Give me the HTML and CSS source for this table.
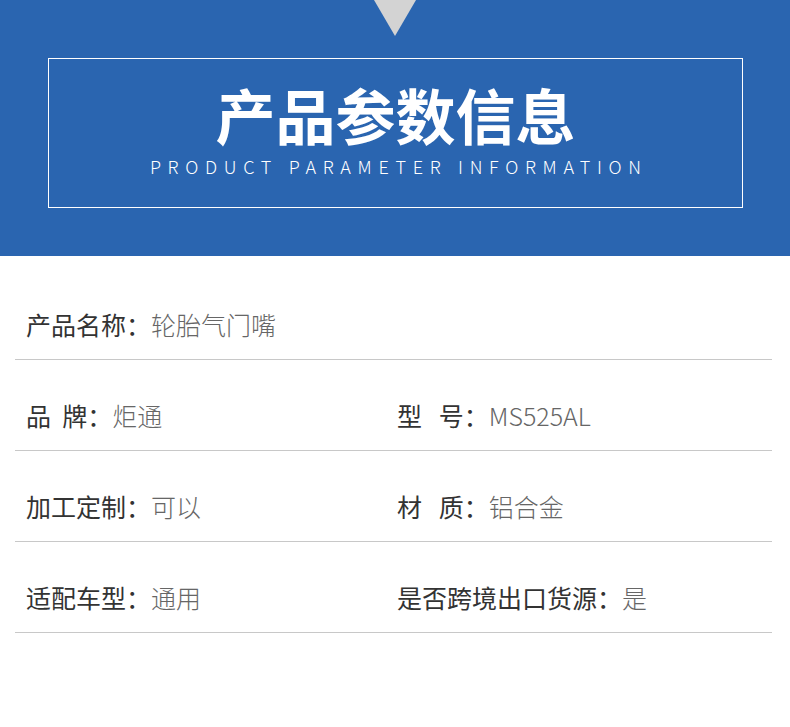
FILE: index.html
```html
<!DOCTYPE html>
<html lang="zh-CN">
<head>
<meta charset="utf-8">
<title>产品参数信息</title>
<link rel="stylesheet" href="styles.css">
</head>
<body>
<header class="banner">
  <div class="arrow"></div>
  <div class="frame">
    <h1 class="title">产品参数信息</h1>
    <p class="subtitle">PRODUCT PARAMETER INFORMATION</p>
  </div>
</header>
<section class="params">
  <div class="row single">
    <div class="cell"><span class="label">产品名称：</span><span class="value">轮胎气门嘴</span></div>
  </div>
  <div class="row">
    <div class="cell"><span class="label">品&nbsp;&nbsp;牌：</span><span class="value">炬通</span></div>
    <div class="cell"><span class="label">型&nbsp;&nbsp;&nbsp;号：</span><span class="value">MS525AL</span></div>
  </div>
  <div class="row">
    <div class="cell"><span class="label">加工定制：</span><span class="value">可以</span></div>
    <div class="cell"><span class="label">材&nbsp;&nbsp;&nbsp;质：</span><span class="value">铝合金</span></div>
  </div>
  <div class="row">
    <div class="cell"><span class="label">适配车型：</span><span class="value">通用</span></div>
    <div class="cell"><span class="label">是否跨境出口货源：</span><span class="value">是</span></div>
  </div>
</section>
</body>
</html>
```
FILE: styles.css
```css
* { box-sizing: border-box; }
html, body { margin: 0; padding: 0; background: #fff; }
body {
  font-family: "Noto Sans CJK SC", "Noto Sans", sans-serif;
  width: 790px;
}
.banner {
  position: relative;
  background: #2a65b0;
  height: 256px;
  padding: 58px 47px 0 48px;
}
.arrow {
  position: absolute;
  left: 374px;
  top: 0;
  width: 0;
  height: 0;
  border-left: 21px solid transparent;
  border-right: 21px solid transparent;
  border-top: 36px solid #d3d3d3;
}
.frame {
  height: 150px;
  border: 1px solid #ffffff;
  display: flex;
  flex-direction: column;
  align-items: center;
  padding-top: 20px;
}
.title {
  margin: 0;
  color: #fff;
  font-size: 60px;
  line-height: 70px;
  font-weight: 700;
}
.subtitle {
  margin: 8px 0 0 0;
  color: #fff;
  font-weight: 300;
  font-size: 18px;
  line-height: 18px;
  letter-spacing: 6.7px;
  padding-left: 6.7px;
}
.params {
  padding: 13px 18px 0 15px;
}
.row {
  display: grid;
  grid-template-columns: 371px 1fr;
  height: 91px;
  border-bottom: 1px solid #c8c8c8;
  padding: 43px 0 0 11px;
}
.cell {
  font-size: 25px;
  line-height: 25px;
  white-space: nowrap;
}
.label { color: #333; font-weight: 400; }
.value { color: #666; font-weight: 300; }
```
